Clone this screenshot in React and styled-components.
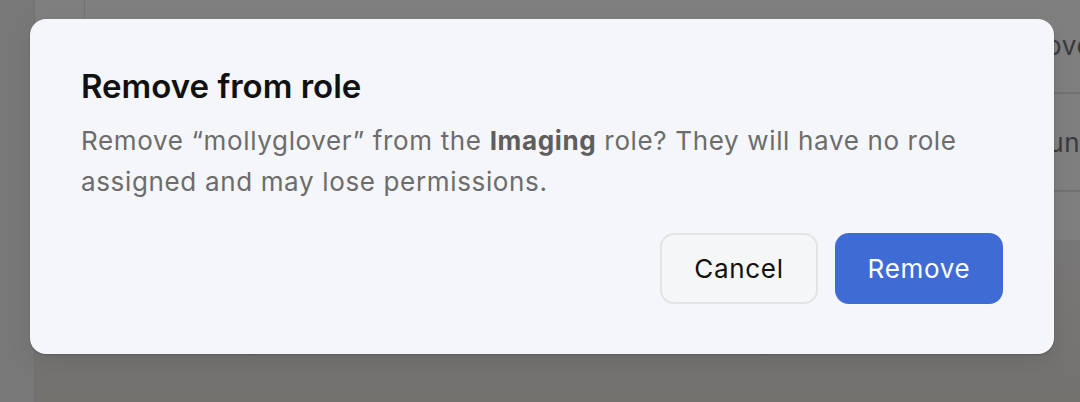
import { createGlobalStyle } from "styled-components"
import styled from "styled-components"

const GlobalStyle = createGlobalStyle`
  * { box-sizing: border-box; }
  html, body {
    margin: 0;
    padding: 0;
    background: #7d7d7d;
    font-family: Inter, "Noto Sans", "Liberation Sans", sans-serif;
    -webkit-font-smoothing: antialiased;
  }
`

const rows = [
  { label: "Remove", offset: 905 },
  { label: "Run", offset: 946 },
]

const App = () => {
  return (
    <>
      <GlobalStyle />
      <Screen>
        <Page>
          <Rail />
          <Main>
            <Table>
              {rows.map((row) => (
                <Row key={row.label}>
                  <Cell offset={row.offset}>{row.label}</Cell>
                </Row>
              ))}
              <Footer />
            </Table>
            <Below />
          </Main>
        </Page>
        <Overlay>
          <Dialog role="dialog" aria-labelledby="remove-title">
            <Title id="remove-title">Remove from role</Title>
            <Message>
              Remove “mollyglover” from the <strong>Imaging</strong> role? They will have no role
              assigned and may lose permissions.
            </Message>
            <Actions>
              <Button>Cancel</Button>
              <Button primary>Remove</Button>
            </Actions>
          </Dialog>
        </Overlay>
      </Screen>
    </>
  )
}

const Screen = styled.div`
  width: 1080px;
  height: 402px;
  position: relative;
  overflow: hidden;
`
const Page = styled.div`
  display: flex;
  height: 100%;
`
const Rail = styled.div`
  width: 35px;
  flex-shrink: 0;
  background: #787878;
  border-right: 1px solid #717171;
`
const Main = styled.div`
  flex: 1;
  display: flex;
  flex-direction: column;
  padding-left: 49px;
  background: #7f7f7f;
`
const Table = styled.div`
  height: 240px;
  display: flex;
  flex-direction: column;
  border-left: 1px solid #737373;
  background: #7f7f7f;
`
const Row = styled.div`
  height: 98px;
  display: flex;
  align-items: center;
  border-bottom: 2px solid #727272;
  &:first-child {
    height: 94px;
    align-items: flex-start;
    padding-top: 30px;
  }
`
const Cell = styled.div`
  padding-left: ${props => props.offset}px;
  white-space: nowrap;
  font-size: 26px;
  letter-spacing: 0.6px;
  color: #3a3a3a;
`
const Footer = styled.div`
  flex: 1;
`
const Below = styled.div`
  flex: 1;
  margin-left: -49px;
  background: linear-gradient(180deg, #797878 0%, #74726f 100%);
`
const Overlay = styled.div`
  position: absolute;
  inset: 0;
  padding: 19px 0 0 30px;
`
const Dialog = styled.div`
  width: 1024px;
  height: 335px;
  display: flex;
  flex-direction: column;
  padding: 47px 51px 50px;
  background: #f4f6f9;
  border-radius: 16px;
  box-shadow: 0 1px 2px rgba(0, 0, 0, 0.18), 0 8px 24px rgba(0, 0, 0, 0.08);
`
const Title = styled.h2`
  margin: 0;
  font-size: 33px;
  line-height: 40px;
  font-weight: 600;
  color: #111111;
`
const Message = styled.p`
  margin: 14px 0 0;
  font-size: 26px;
  line-height: 41px;
  letter-spacing: 0.65px;
  color: #6c6c6c;
  strong {
    font-weight: 700;
    color: #5e5e5e;
  }
`
const Actions = styled.div`
  margin-top: auto;
  display: flex;
  justify-content: flex-end;
  gap: 17px;
`
const Button = styled.button`
  height: 71px;
  width: ${props => props.primary ? 168 : 158}px;
  border-radius: 14px;
  font-family: inherit;
  font-size: 26px;
  letter-spacing: 0.7px;
  font-weight: 400;
  cursor: pointer;
  border: 2px solid ${props => props.primary ? "#3f6cd4" : "#e2e3e5"};
  background: ${props => props.primary ? "#3f6cd4" : "#f5f6f8"};
  color: ${props => props.primary ? "#ffffff" : "#111111"};
`

export default App
